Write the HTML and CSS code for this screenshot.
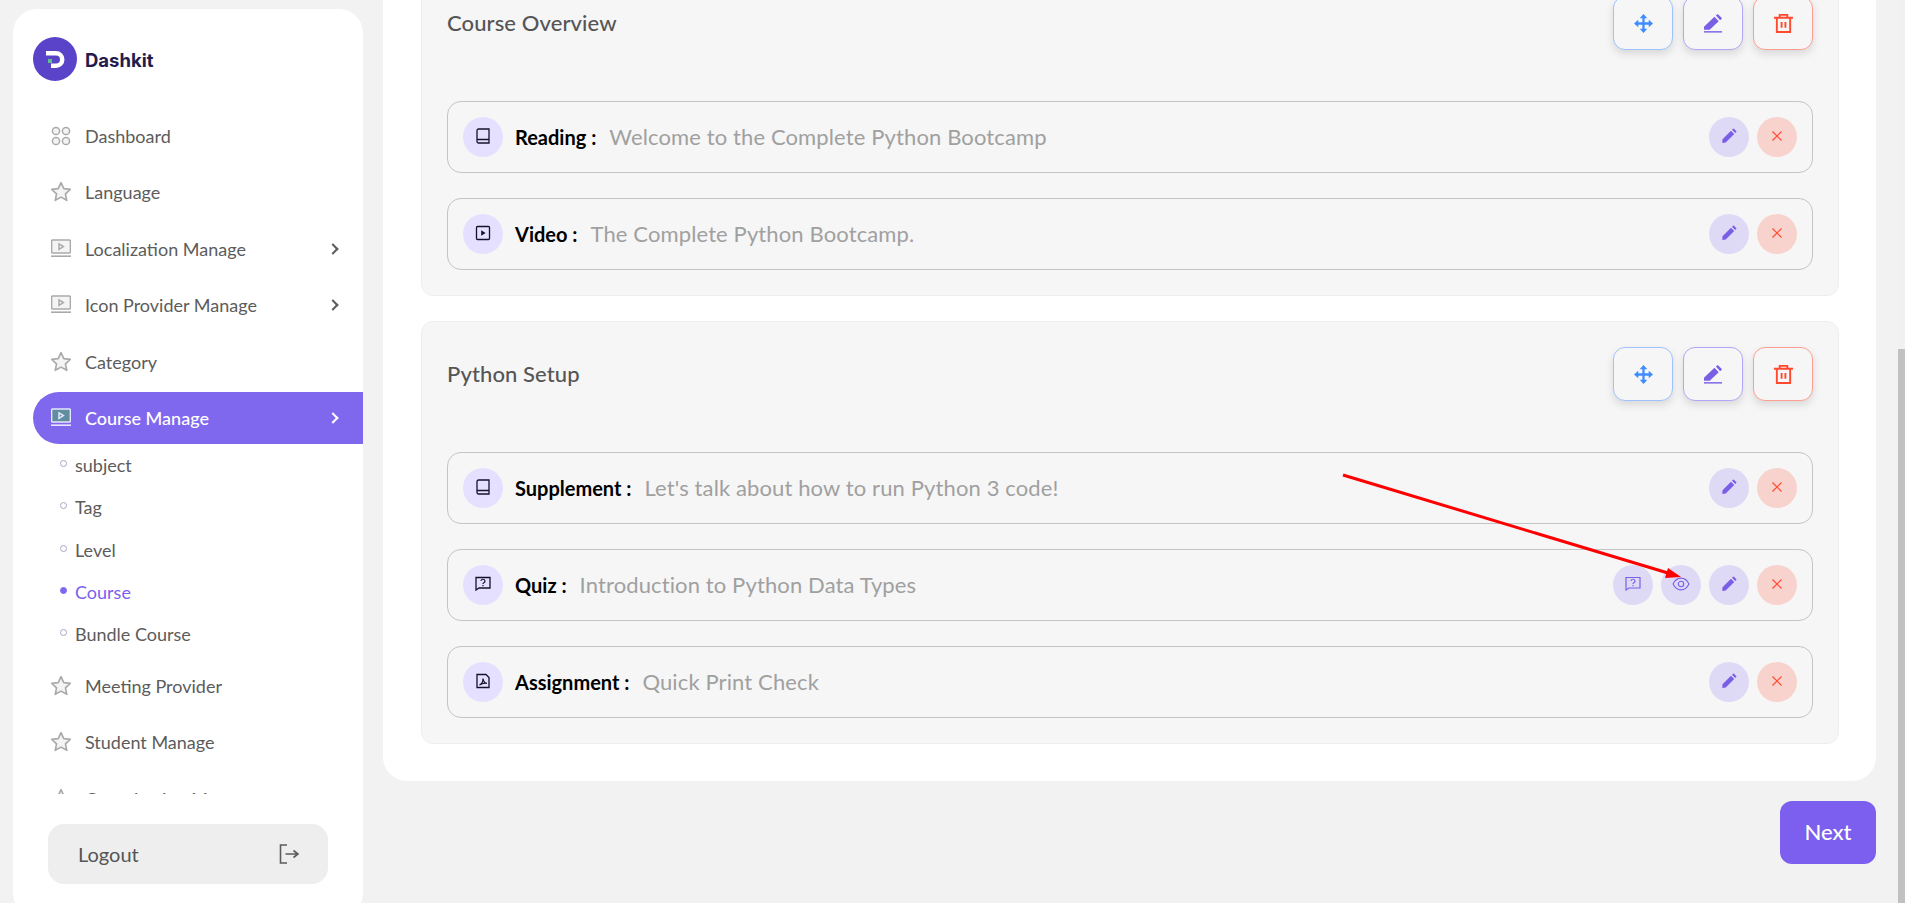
FILE: index.html
```html
<!DOCTYPE html>
<html lang="en">
<head>
  <meta charset="UTF-8">
  <meta name="viewport" content="width=device-width, initial-scale=1.0">
  <title>Course Manage</title>
  <link rel="stylesheet" href="styles.css">
</head>
<body>
  <svg class="sprites" width="0" height="0">
    <symbol id="i-grid" viewBox="0 0 20 20">
      <circle cx="5" cy="5" r="3.6"/><circle cx="15" cy="5" r="3.6"/><circle cx="5" cy="15" r="3.6"/><circle cx="15" cy="15" r="3.6"/>
    </symbol>
    <symbol id="i-star" viewBox="1 1 18 18">
      <path d="M10 1.600l2.500 5.400 5.900.7-4.400 4 1.200 5.800-5.200-2.900-5.200 2.900 1.200-5.800-4.400-4 5.900-.7z" stroke-linejoin="round"/>
    </symbol>
    <symbol id="i-screen" viewBox="0 0 20 20">
      <rect x="0.600" y="1" width="18.800" height="13" rx="1"/><path d="M8 4.800l4.400 2.800L8 10.400z"/><path d="M0 17.200h20" stroke-width="1.600"/>
    </symbol>
    <symbol id="i-book" viewBox="0 0 16 16">
      <path d="M2 13.500V2.500a1.500 1.500 0 0 1 1.500-1.500H14v14H3.500A1.500 1.500 0 0 1 2 13.500zM2 11.500h12"/>
    </symbol>
    <symbol id="i-play" viewBox="0 0 16 16">
      <rect x="1.500" y="1.500" width="13" height="13" rx="1"/><path class="solid" d="M6.200 5.200l4.400 2.800-4.400 2.800z"/>
    </symbol>
    <symbol id="i-quiz" viewBox="0 0 16 16">
      <path d="M1 1.500h14v10.500H4l-3 2z"/><path d="M6 5a2 1.800 0 1 1 2.800 1.700C8.200 7 8 7.400 8 8" stroke-width="1.200"/><path class="solid" d="M7.400 9h1.200v1.200H7.400z"/>
    </symbol>
    <symbol id="i-pdf" viewBox="0 0 16 16">
      <path d="M2 1.500h9l3 3v10H2z"/><path d="M4.500 12c2-1 3.500-3.500 3.500-6.500 .5 3 2 4.500 4 4.800-3-.3-5.500.3-7.500 1.700z" stroke-width="1.200"/>
    </symbol>
    <symbol id="i-eye" viewBox="0 0 20 20">
      <path d="M1.200 10C3.500 5 7 3.500 10 3.500S16.500 5 18.800 10C16.500 15 13 16.500 10 16.500S3.500 15 1.200 10z"/><circle cx="10" cy="10" r="3"/>
    </symbol>
    <symbol id="i-pencil" viewBox="0 0 16 16">
      <path class="solid" d="M1.500 11.200L10 2.800l3.200 3.200-8.500 8.400-3 .5a.4.4 0 0 1-.4-.4zM11 1.800l1-1a.7.7 0 0 1 1 0l2.200 2.200a.7.7 0 0 1 0 1l-1 1z"/>
    </symbol>
    <symbol id="i-close" viewBox="0 0 12 12">
      <path d="M1.500 1.500l9 9M10.500 1.500l-9 9"/>
    </symbol>
    <symbol id="i-move" viewBox="0 0 20 20">
      <path class="solid" d="M10 0L14 4.500H11.200V8.800H15.500V6L20 10L15.500 14V11.200H11.200V15.500H14L10 20L6 15.500H8.800V11.200H4.500V14L0 10L4.500 6V8.800H8.800V4.500H6z"/>
    </symbol>
    <symbol id="i-edit" viewBox="0 0 20 20">
      <path class="solid" d="M0 13.500L11 3l4.500 4.500L6 16.500H0zM12.500 1.500L14.500 0l4.500 4.500-2 2z"/><path d="M0 18.800h19" stroke-width="1.500"/>
    </symbol>
    <symbol id="i-trash" viewBox="0 0 20 20">
      <path d="M0 4h20M3 4v15h14V4M6 4V.9h8V4"/><path d="M8 8.500v6M12 8.500v6" stroke-width="2"/>
    </symbol>
  </svg>

  <aside class="sidebar">
    <div class="brand">
      <svg class="brand-logo" viewBox="0 0 44 44">
        <circle cx="22" cy="22" r="22" fill="#5a43c8"/>
        <path d="M13 14h10a8.500 8.500 0 0 1 0 17h-5v-4.500h5a4 4 0 0 0 0-8H13z" fill="#fff"/>
        <rect x="15" y="22" width="4" height="4" fill="#5fc08c"/>
      </svg>
      <span class="brand-name">Dashkit</span>
    </div>

    <nav class="nav">
      <a class="nav-item"><svg class="nav-icon"><use href="#i-grid"/></svg>Dashboard</a>
      <a class="nav-item"><svg class="nav-icon"><use href="#i-star"/></svg>Language</a>
      <a class="nav-item"><svg class="nav-icon"><use href="#i-screen"/></svg>Localization Manage<span class="chevron"></span></a>
      <a class="nav-item"><svg class="nav-icon"><use href="#i-screen"/></svg>Icon Provider Manage<span class="chevron"></span></a>
      <a class="nav-item"><svg class="nav-icon"><use href="#i-star"/></svg>Category</a>
      <a class="nav-item active"><svg class="nav-icon"><use href="#i-screen"/></svg>Course Manage<span class="chevron"></span></a>
      <ul class="subnav">
        <li>subject</li>
        <li>Tag</li>
        <li>Level</li>
        <li class="current">Course</li>
        <li>Bundle Course</li>
      </ul>
      <a class="nav-item"><svg class="nav-icon"><use href="#i-star"/></svg>Meeting Provider</a>
      <a class="nav-item"><svg class="nav-icon"><use href="#i-star"/></svg>Student Manage</a>
      <a class="nav-item"><svg class="nav-icon"><use href="#i-star"/></svg>Organization Manage</a>
    </nav>

    <button class="logout">Logout
      <svg class="logout-icon" viewBox="0 0 20 20"><path d="M8 1H1.500v18H8M6.500 10H19M14.500 6.500L19 10l-4.500 3.500"/></svg>
    </button>
  </aside>

  <main class="main">
    <div class="card">
      <section class="section">
        <div class="section-head">
          <h3>Course Overview</h3>
          <div class="tools">
            <button class="tool tool-move"><svg><use href="#i-move"/></svg></button>
            <button class="tool tool-edit"><svg><use href="#i-edit"/></svg></button>
            <button class="tool tool-trash"><svg><use href="#i-trash"/></svg></button>
          </div>
        </div>
        <div class="lessons">
          <div class="lesson">
            <span class="lesson-icon"><svg><use href="#i-book"/></svg></span>
            <strong>Reading :</strong><span class="lesson-title">Welcome to the Complete Python Bootcamp</span>
            <span class="round purple"><svg class="pen"><use href="#i-pencil"/></svg></span>
            <span class="round red"><svg class="cross"><use href="#i-close"/></svg></span>
          </div>
          <div class="lesson">
            <span class="lesson-icon"><svg><use href="#i-play"/></svg></span>
            <strong>Video :</strong><span class="lesson-title">The Complete Python Bootcamp.</span>
            <span class="round purple"><svg class="pen"><use href="#i-pencil"/></svg></span>
            <span class="round red"><svg class="cross"><use href="#i-close"/></svg></span>
          </div>
        </div>
      </section>

      <section class="section">
        <div class="section-head">
          <h3>Python Setup</h3>
          <div class="tools">
            <button class="tool tool-move"><svg><use href="#i-move"/></svg></button>
            <button class="tool tool-edit"><svg><use href="#i-edit"/></svg></button>
            <button class="tool tool-trash"><svg><use href="#i-trash"/></svg></button>
          </div>
        </div>
        <div class="lessons">
          <div class="lesson">
            <span class="lesson-icon"><svg><use href="#i-book"/></svg></span>
            <strong>Supplement :</strong><span class="lesson-title">Let's talk about how to run Python 3 code!</span>
            <span class="round purple"><svg class="pen"><use href="#i-pencil"/></svg></span>
            <span class="round red"><svg class="cross"><use href="#i-close"/></svg></span>
          </div>
          <div class="lesson">
            <span class="lesson-icon"><svg><use href="#i-quiz"/></svg></span>
            <strong>Quiz :</strong><span class="lesson-title">Introduction to Python Data Types</span>
            <span class="round purple"><svg class="outline"><use href="#i-quiz"/></svg></span>
            <span class="round purple"><svg class="outline eye"><use href="#i-eye"/></svg></span>
            <span class="round purple"><svg class="pen"><use href="#i-pencil"/></svg></span>
            <span class="round red"><svg class="cross"><use href="#i-close"/></svg></span>
          </div>
          <div class="lesson">
            <span class="lesson-icon"><svg><use href="#i-pdf"/></svg></span>
            <strong>Assignment :</strong><span class="lesson-title">Quick Print Check</span>
            <span class="round purple"><svg class="pen"><use href="#i-pencil"/></svg></span>
            <span class="round red"><svg class="cross"><use href="#i-close"/></svg></span>
          </div>
        </div>
      </section>
    </div>

    <div class="actions">
      <button class="next">Next</button>
    </div>
  </main>

  <div class="scrollbar"><div class="thumb"></div></div>

  <!-- annotation drawn over the screenshot -->
  <svg class="arrow" viewBox="0 0 1905 903">
    <path d="M1343 475L1668 573" stroke="#f00" stroke-width="3" fill="none"/>
    <path d="M1681 577L1665 578L1668 568z" fill="#f00"/>
  </svg>
</body>
</html>
```

FILE: styles.css
```css
* {
  box-sizing: border-box;
}
body {
  margin: 0;
  height: 903px;
  overflow: hidden;
  display: flex;
  align-items: flex-start;
  background: #f2f2f2;
  font-family: Lato, "Noto Sans", sans-serif;
}
button {
  font-family: inherit;
  border: none;
  cursor: pointer;
}
.sprites {
  position: absolute;
}
.solid {
  fill: currentColor;
  stroke: none;
}

/* sidebar */
.sidebar {
  flex: none;
  width: 350px;
  height: 908px;
  margin: 9px 0 0 13px;
  background: white;
  border-radius: 24px;
  display: flex;
  flex-direction: column;
}
.brand {
  display: flex;
  align-items: center;
  gap: 8px;
  padding: 28px 0 0 20px;
}
.brand-logo {
  width: 44px;
  height: 44px;
}
.brand-name {
  margin-top: 2px;
  font-family: Inter, sans-serif;
  font-size: 18.500px;
  font-weight: 700;
  color: #221d4d;
}
.nav {
  height: 684px;
  margin-top: 29px;
  padding-left: 20px;
  overflow: hidden;
  display: flex;
  flex-direction: column;
  gap: 4.400px;
}
.nav-item {
  flex: none;
  height: 52px;
  padding: 0 26px 0 18px;
  display: flex;
  align-items: center;
  font-size: 18px;
  color: #5c5c5c;
  border-radius: 26px 0 0 26px;
}
.nav-icon {
  flex: none;
  width: 20px;
  height: 20px;
  margin-right: 14px;
  fill: #f4f4f4;
  stroke: #aaa;
  stroke-width: 1.500;
}
.chevron {
  width: 8px;
  height: 8px;
  margin-left: auto;
  border-top: 2px solid #5c5c5c;
  border-right: 2px solid #5c5c5c;
  transform: rotate(45deg);
}
.nav-item.active {
  background: #8068ee;
  color: white;
  font-weight: 500;
}
.nav-item.active .nav-icon {
  fill: #5f8f9f;
  stroke: #e8e4ff;
}
.nav-item.active .chevron {
  border-color: white;
}
.subnav {
  list-style: none;
  margin: -4.400px 0 0;
  padding: 0 0 0 27px;
  color: #5c5c5c;
  font-size: 18px;
}
.subnav li {
  height: 42.300px;
  display: flex;
  align-items: center;
  gap: 8px;
}
.subnav li::before {
  content: "";
  width: 5px;
  height: 5px;
  border: 1px solid #a9a6c4;
  border-radius: 50%;
  margin-bottom: 3px;
}
.subnav .current {
  color: #7c5fee;
}
.subnav .current::before {
  background: #8068ee;
  border-color: #8068ee;
}
.logout {
  width: 280px;
  height: 60px;
  margin: 30px 0 0 35px;
  padding: 0 29px 0 30px;
  display: flex;
  align-items: center;
  justify-content: space-between;
  background: #eee;
  border-radius: 16px;
  font-size: 20px;
  color: #555;
}
.logout-icon {
  width: 20px;
  height: 20px;
  fill: none;
  stroke: #5c5c5c;
  stroke-width: 1.600;
}

/* main column */
.main {
  flex: none;
  width: 1493px;
  margin-left: 20px;
}
.card {
  margin-top: -68px;
  padding: 38px 37px 37px 38px;
  background: white;
  border-radius: 24px;
  display: flex;
  flex-direction: column;
  gap: 25px;
}
.section {
  padding: 25px;
  background: #f6f6f6;
  border: 1px solid #eee;
  border-radius: 12px;
}
.section-head {
  display: flex;
  align-items: center;
  justify-content: space-between;
  margin-bottom: 51px;
}
.section-head h3 {
  margin: 0 0 2px;
  font-size: 22px;
  font-weight: 500;
  letter-spacing: 0.100px;
  color: #555;
}
.tools {
  display: flex;
  gap: 10px;
}
.tool {
  width: 60px;
  height: 54px;
  display: flex;
  align-items: center;
  justify-content: center;
  background: #f6f6f6;
  border-radius: 12px;
  box-shadow: 0 4px 8px rgba(0, 0, 0, 0.12);
}
.tool svg {
  width: 19px;
  height: 19px;
}
.tool-move {
  border: 1px solid #9dc3ff;
  color: #3f8cff;
}
.tool-edit {
  border: 1px solid #b3a6f8;
  color: #7a5fe6;
  stroke: #7a5fe6;
}
.tool-trash {
  border: 1px solid #ff9e8f;
  fill: none;
  stroke: #ff4a2f;
  stroke-width: 2;
}
.lessons {
  display: flex;
  flex-direction: column;
  gap: 25px;
}
.lesson {
  height: 72px;
  padding: 0 15px;
  display: flex;
  align-items: center;
  gap: 8px;
  background: #f6f6f6;
  border: 1px solid #c4c4c4;
  border-radius: 14px;
}
.lesson-icon {
  flex: none;
  width: 40px;
  height: 40px;
  margin-right: 4px;
  padding-bottom: 2px;
  display: flex;
  align-items: center;
  justify-content: center;
  background: #e5e0ff;
  border-radius: 50%;
}
.lesson-icon svg {
  width: 16px;
  height: 16px;
  color: #14122b;
  fill: none;
  stroke: #14122b;
  stroke-width: 1.300;
}
.lesson strong {
  margin-bottom: 1px;
  font-size: 20px;
  font-weight: 700;
  color: black;
}
.lesson-title {
  flex: 1;
  margin: 0 0 2px 5px;
  font-size: 22px;
  letter-spacing: 0.120px;
  color: #a0a0a0;
}
.round {
  flex: none;
  width: 40px;
  height: 40px;
  padding-bottom: 2px;
  display: flex;
  align-items: center;
  justify-content: center;
  border-radius: 50%;
}
.round.purple {
  background: #dedaf6;
}
.round.red {
  background: #f8d3cd;
}
.pen {
  width: 16px;
  height: 16px;
  color: #7a5fe6;
}
.cross {
  width: 12px;
  height: 12px;
  fill: none;
  stroke: #ff4a2f;
  stroke-width: 1.200;
}
.outline {
  width: 16px;
  height: 16px;
  color: #7a5fe6;
  fill: none;
  stroke: #7a5fe6;
  stroke-width: 1.200;
}
.outline.eye {
  width: 18px;
  height: 18px;
}

/* footer button */
.actions {
  display: flex;
  justify-content: flex-end;
  margin-top: 20px;
}
.next {
  width: 96px;
  height: 63px;
  padding-bottom: 3px;
  background: #7c5fee;
  border-radius: 12px;
  font-size: 22px;
  font-weight: 500;
  color: white;
}

/* page scrollbar */
.scrollbar {
  position: fixed;
  top: 0;
  right: 0;
  bottom: 0;
  width: 7px;
  background: #f1f1f1;
  display: flex;
  align-items: flex-end;
}
.thumb {
  width: 100%;
  height: 554px;
  background: #c1c1c1;
}
.arrow {
  position: fixed;
  top: 0;
  left: 0;
  width: 1905px;
  height: 903px;
  pointer-events: none;
}
```
